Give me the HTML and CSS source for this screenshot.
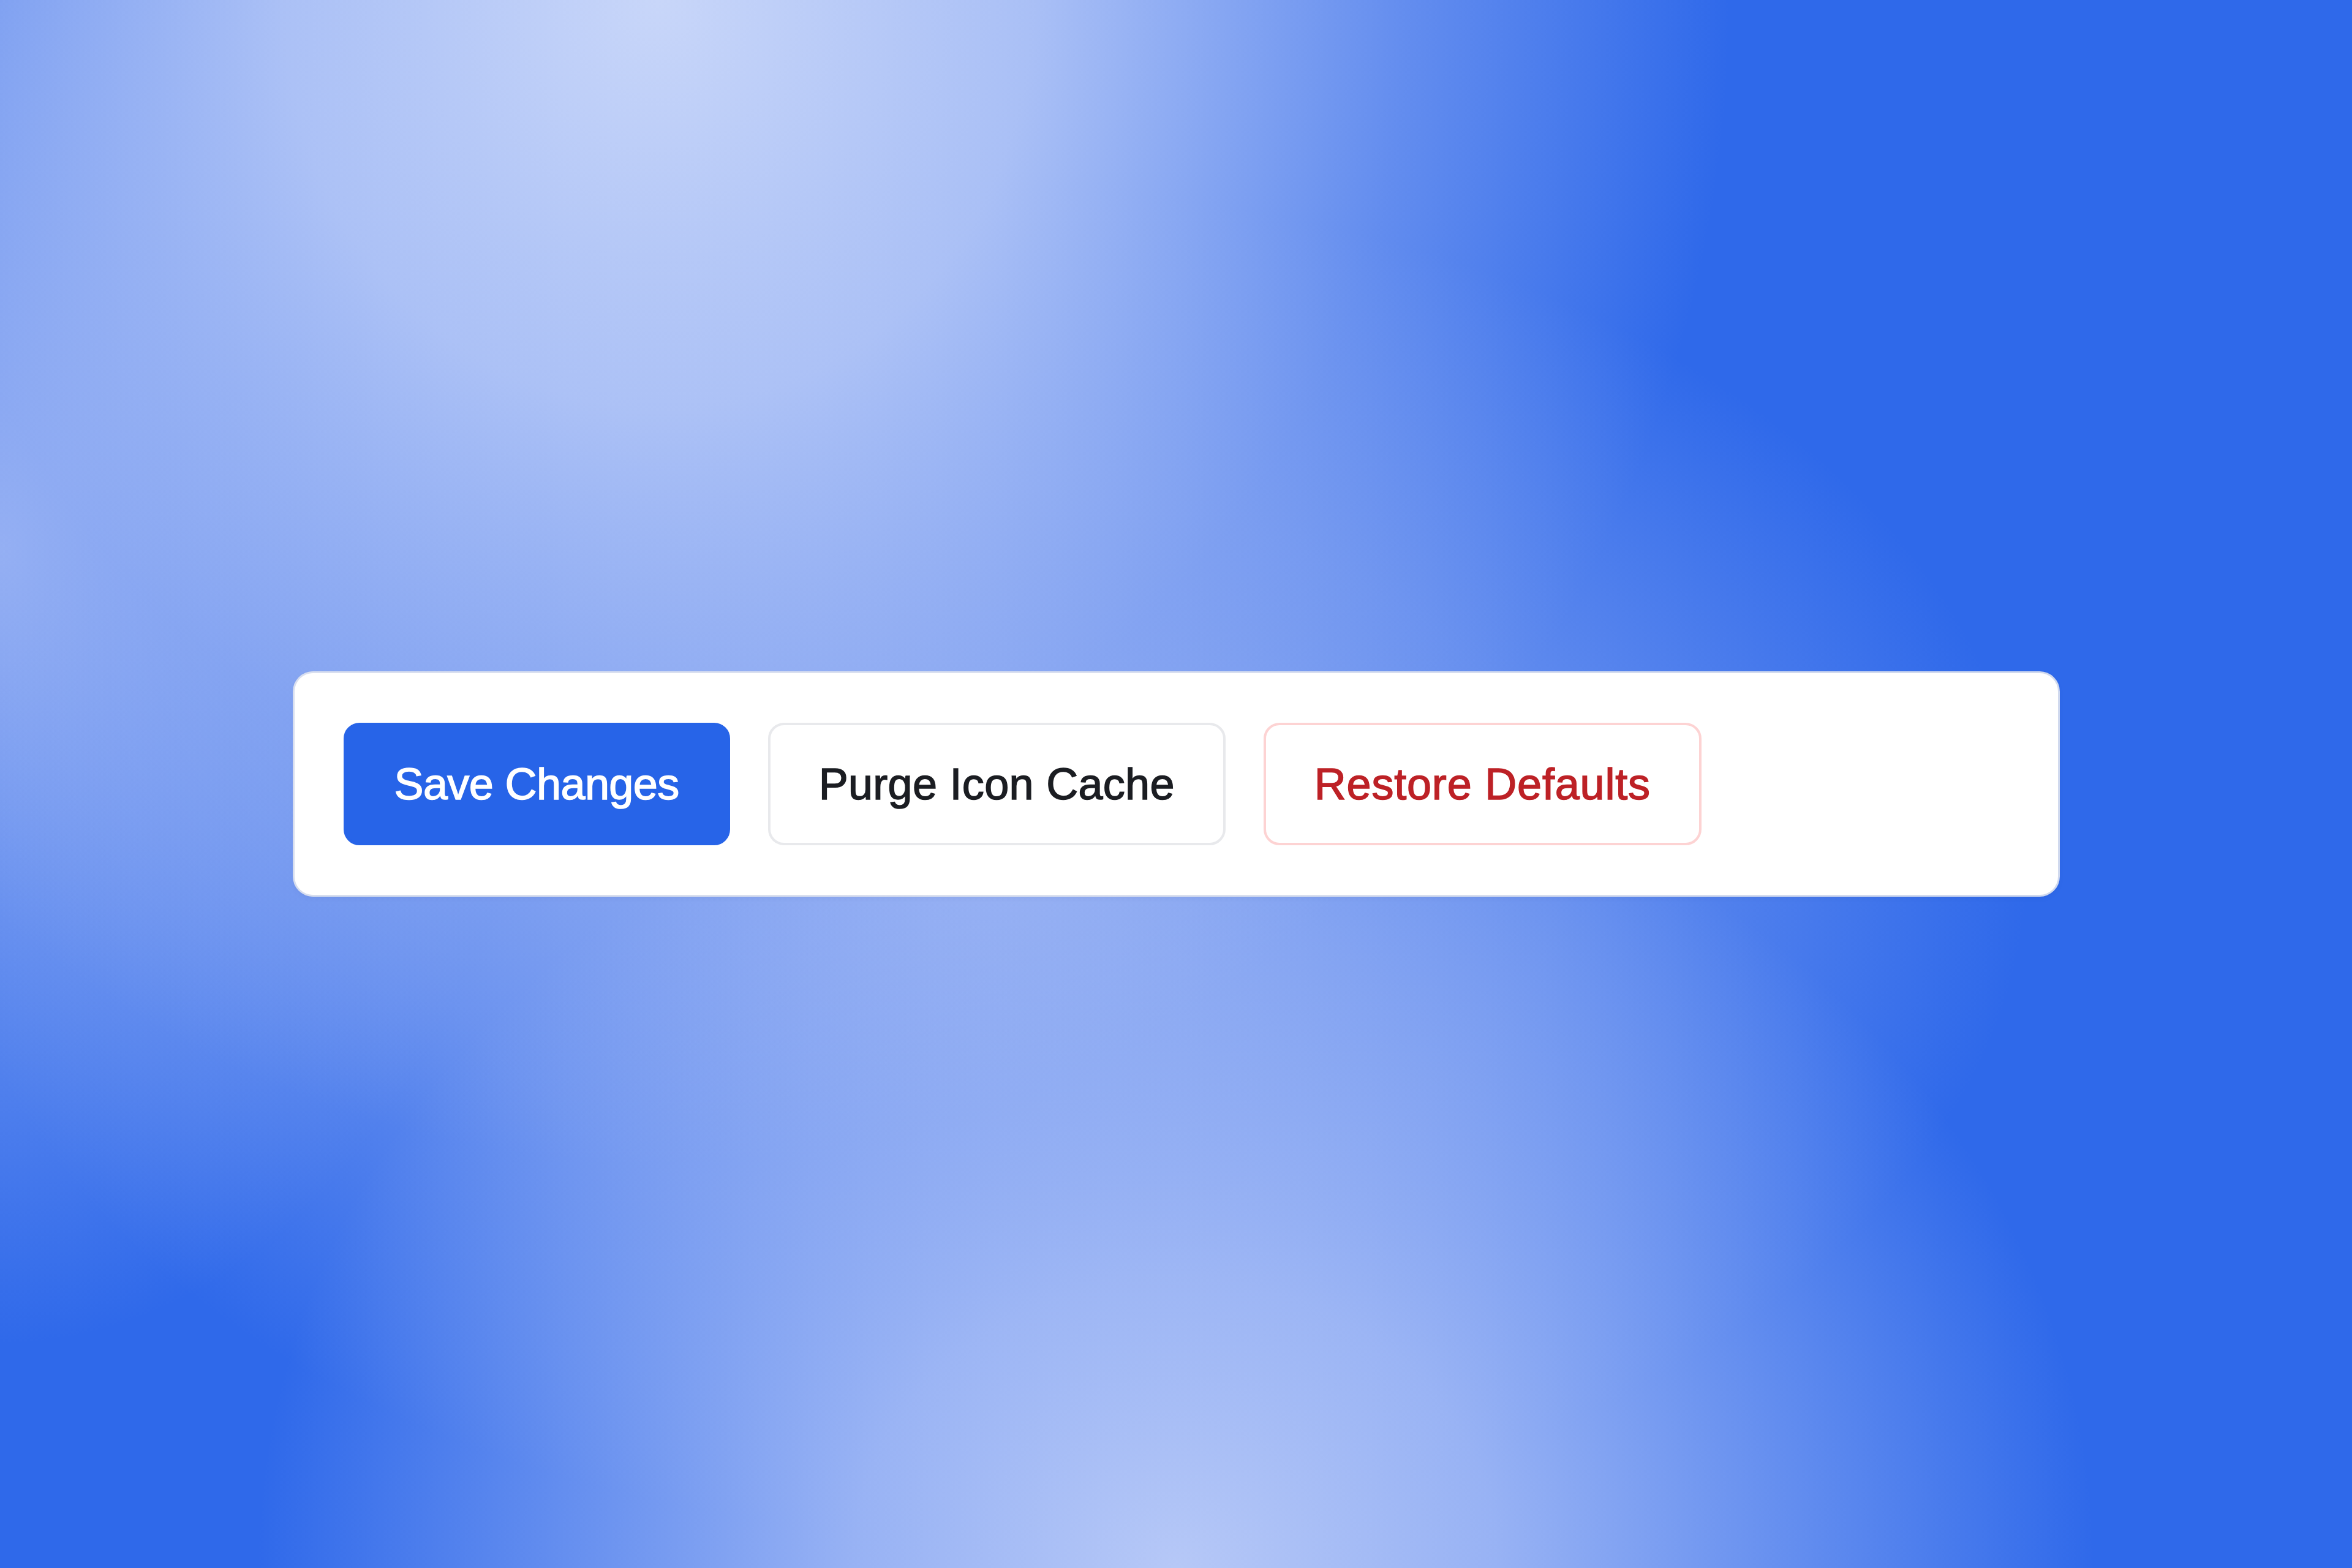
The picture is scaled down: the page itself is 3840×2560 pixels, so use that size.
FILE: index.html
```html
<!DOCTYPE html>
<html lang="en">
<head>
    <meta charset="UTF-8">
    <meta name="viewport" content="width=device-width, initial-scale=1.0">
    <title>Settings Actions</title>
    <link rel="stylesheet" href="styles.css">
</head>
<body>
    <div class="action-bar">
        <button type="button" class="btn btn-primary">Save Changes</button>
        <button type="button" class="btn btn-secondary">Purge Icon Cache</button>
        <button type="button" class="btn btn-danger">Restore Defaults</button>
    </div>
</body>
</html>
```

FILE: styles.css
```css
html, body {
    margin: 0;
    height: 100%;
}
body {
    font-family: "Liberation Sans", Arial, sans-serif;
    display: flex;
    justify-content: center;
    align-items: center;
    background-color: #2f69ea;
    background-image:
        radial-gradient(ellipse 1500px 1350px at 50% 100%, rgba(182, 200, 247, 1) 0%, rgba(170, 191, 246, 0.85) 35%, rgba(150, 176, 243, 0) 100%),
        radial-gradient(ellipse 1750px 1900px at 28% 0%, rgba(200, 214, 249, 1) 0%, rgba(183, 201, 247, 0.9) 35%, rgba(150, 176, 243, 0.5) 70%, rgba(150, 176, 243, 0) 100%),
        radial-gradient(ellipse 1700px 1100px at 42% 55%, rgba(150, 176, 243, 0.95) 0%, rgba(150, 176, 243, 0.5) 55%, rgba(150, 176, 243, 0) 100%),
        radial-gradient(ellipse 900px 1300px at 0% 35%, rgba(165, 187, 245, 0.85) 0%, rgba(165, 187, 245, 0) 100%);
}
.action-bar {
    width: 2879px;
    box-sizing: border-box;
    padding: 81px 80px;
    display: flex;
    gap: 62px;
    background: #fff;
    border-radius: 30px;
    box-shadow: 0 0 0 3px rgba(226, 230, 238, 0.9), 0 4px 12px rgba(20, 40, 90, 0.06);
}
.btn {
    font-family: inherit;
    font-size: 72px;
    line-height: 84px;
    padding: 54px 79px;
    border: 4px solid transparent;
    border-radius: 26px;
    background: #fff;
    cursor: pointer;
    -webkit-text-stroke: 1.5px currentColor;
}
.btn-primary {
    background: #2764e8;
    border-color: #2764e8;
    color: #fff;
    letter-spacing: -0.6px;
}
.btn-secondary {
    border-color: #e8e9ec;
    color: #1b1d22;
    letter-spacing: 0.3px;
}
.btn-danger {
    border-color: #fdd3d3;
    color: #bd2126;
    letter-spacing: 0.8px;
}
```
